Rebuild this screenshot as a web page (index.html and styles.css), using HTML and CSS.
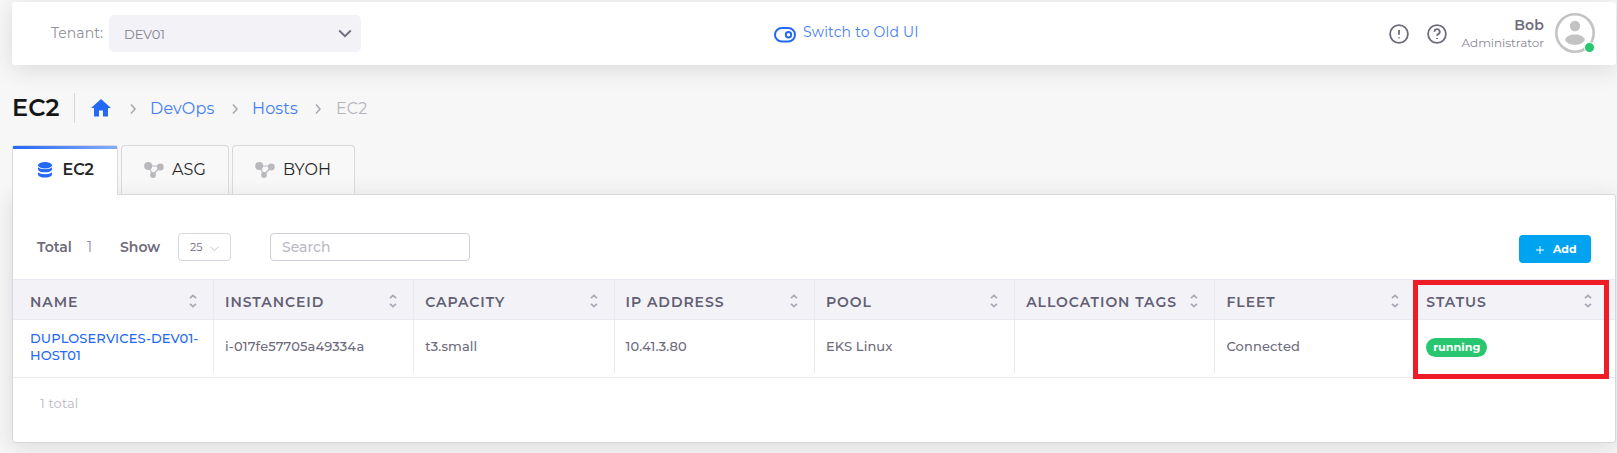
FILE: index.html
```html
<!DOCTYPE html>
<html lang="en">
<head>
<meta charset="utf-8">
<title>EC2 Hosts</title>
<link rel="stylesheet" href="styles.css">
</head>
<body>
<svg class="defs" width="0" height="0" aria-hidden="true">
  <symbol id="sort" viewBox="0 0 8 14"><path d="M1 4.2 4 1.4l3 2.8M1 9.8l3 2.8 3-2.8"/></symbol>
  <symbol id="chev" viewBox="0 0 6 10"><path d="M1 .600l4 4.400-4 4.400"/></symbol>
  <symbol id="nodes" viewBox="0 0 20 16"><path d="M4 4h12M4 4l5 9M16 5l-7 8" stroke="#b9b9bd" stroke-width="1.2"/><circle cx="4.2" cy="4" r="4"/><circle cx="16.3" cy="5" r="3.4"/><circle cx="9" cy="13" r="2.9"/></symbol>
</svg>
<header class="topbar">
  <label class="tenant">Tenant:</label>
  <div class="tenant-select"><span>DEV01</span><svg width="14" height="9" viewBox="0 0 14 9"><path d="M1.2 1.5 7 7.2l5.800-5.700"/></svg></div>
  <a class="switch"><svg width="22" height="16" viewBox="0 0 22 16"><rect x="1" y="1" width="20" height="13.500" rx="6.750"/><circle cx="14.500" cy="7.750" r="2.700"/></svg><span>Switch to Old UI</span></a>
  <div class="user">
    <svg class="help" width="20" height="20" viewBox="0 0 20 20"><circle cx="10" cy="10" r="8.900"/><path d="M10 6v4.700M10 13.200v1"/></svg>
    <svg class="help" width="20" height="20" viewBox="0 0 20 20"><circle cx="10" cy="10" r="8.900"/><path d="M7.500 7.800a2.600 2.600 0 1 1 3.700 2.300Q10 10.700 10 11.700M10 14v1"/></svg>
    <div class="who"><b>Bob</b><span>Administrator</span></div>
    <div class="avatar"><svg width="40" height="40" viewBox="0 0 40 40"><circle cx="20" cy="20" r="18.700" fill="none" stroke="#c3c3c3" stroke-width="2.600"/><circle cx="20" cy="13" r="5.200"/><path d="M10 26.800c2-7.200 18-7.200 20 0-3.500 6.900-16.500 6.900-20 0z"/></svg><i class="online"></i></div>
  </div>
</header>
<nav class="crumbs">
  <h1>EC2</h1>
  <svg class="home" width="20" height="18" viewBox="0 0 20 18"><path d="M10 0 0 9h3v8.500h5v-6h4v6h5V9h3z"/></svg>
  <svg class="chev" width="6" height="10"><use href="#chev"/></svg>
  <a class="devops">DevOps</a>
  <svg class="chev" width="6" height="10"><use href="#chev"/></svg>
  <a class="hosts">Hosts</a>
  <svg class="chev" width="6" height="10"><use href="#chev"/></svg>
  <span class="here">EC2</span>
</nav>
<div class="tabs">
  <div class="tab active"><svg width="14" height="16" viewBox="0 0 14 16"><ellipse cx="7" cy="3.200" rx="7" ry="3.200"/><path d="M0 5.300c2 2.600 12 2.600 14 0v2.200c-1 3.800-13 3.800-14 0zM0 10.200c2 2.600 12 2.600 14 0v2.200c-1 4.200-13 4.200-14 0z"/></svg><span>EC2</span></div>
  <div class="tab asg"><svg width="20" height="16"><use href="#nodes"/></svg><span>ASG</span></div>
  <div class="tab byoh"><svg width="20" height="16"><use href="#nodes"/></svg><span>BYOH</span></div>
</div>
<main class="panel">
  <div class="toolbar">
    <b class="total">Total</b><span class="count">1</span><b class="show">Show</b>
    <div class="size"><span>25</span><svg width="9" height="6" viewBox="0 0 9 6"><path d="M.5.700l4 4 4-4"/></svg></div>
    <div class="search">Search</div>
    <div class="add"><svg width="8" height="8" viewBox="0 0 8 8"><path d="M4 0v8M0 4h8"/></svg><span>Add</span></div>
  </div>
  <div class="table">
    <div class="row head">
      <div class="cell"><span>NAME</span><svg width="8" height="14"><use href="#sort"/></svg></div>
      <div class="cell"><span>INSTANCEID</span><svg width="8" height="14"><use href="#sort"/></svg></div>
      <div class="cell"><span>CAPACITY</span><svg width="8" height="14"><use href="#sort"/></svg></div>
      <div class="cell"><span>IP ADDRESS</span><svg width="8" height="14"><use href="#sort"/></svg></div>
      <div class="cell"><span>POOL</span><svg width="8" height="14"><use href="#sort"/></svg></div>
      <div class="cell"><span>ALLOCATION TAGS</span><svg width="8" height="14"><use href="#sort"/></svg></div>
      <div class="cell"><span>FLEET</span><svg width="8" height="14"><use href="#sort"/></svg></div>
      <div class="cell"><span>STATUS</span><svg width="8" height="14"><use href="#sort"/></svg></div>
    </div>
    <div class="row body">
      <div class="cell"><a class="host">DUPLOSERVICES-DEV01-<br>HOST01</a></div>
      <div class="cell">i-017fe57705a49334a</div>
      <div class="cell">t3.small</div>
      <div class="cell">10.41.3.80</div>
      <div class="cell">EKS Linux</div>
      <div class="cell"></div>
      <div class="cell">Connected</div>
      <div class="cell"><span class="badge">running</span></div>
    </div>
    <div class="highlight"></div>
  </div>
  <div class="footer">1 total</div>
</main>
</body>
</html>
```
FILE: styles.css
```css
* { box-sizing: border-box; }
body { margin: 0; height: 453px; overflow: hidden; padding: 2px 1px 0 12px; background: #f7f7f7; color: #6e6b7b; font: 13px/17px Montserrat, Inter, sans-serif; white-space: nowrap; }
svg { flex: none; fill: none; stroke: currentColor; }
.defs { position: absolute; }
b { font-weight: 600; }
a { color: #2468f6; }

.topbar { display: grid; grid-template-columns: 58px 252px 1fr auto; align-items: center; height: 63px; padding: 0 21px 1px 39px; background: #fff; border-radius: 3px; box-shadow: 0 4px 24px rgba(34, 41, 47, .14); }
.tenant { padding: 1px 0 0; font-size: 14px; color: #918f9b; letter-spacing: .05px; }
.tenant-select { display: flex; align-items: center; justify-content: space-between; height: 37px; margin-top: 1px; padding: 1px 9px 0 15px; background: #f3f2f7; border-radius: 5px; color: #827f8d; letter-spacing: -.1px; }
.tenant-select svg { stroke: #6e6b7b; stroke-width: 1.8; margin-top: -2px; }
.switch { display: flex; align-items: center; gap: 7px; padding-left: 413px; font-size: 14px; letter-spacing: .2px; }
.switch svg { stroke-width: 2; margin-top: 3px; }
.switch span { color: #4380f5; margin-top: -1px; }
.user { display: flex; align-items: center; }
.help { margin: 1px 18px 0 0; stroke-width: 1.8; }
.who { display: flex; flex-direction: column; align-items: flex-end; margin-left: -3px; margin-right: 11px; padding-top: 1px; }
.who b { font-size: 14px; line-height: 18px; letter-spacing: .15px; }
.who span { font-size: 12px; color: #8b8895; letter-spacing: -.05px; }
.avatar { position: relative; height: 40px; }
.avatar svg { fill: #c3c3c3; stroke: none; }
.online { position: absolute; right: 0; bottom: 0; width: 11px; height: 11px; border-radius: 50%; background: #28c76f; border: 1px solid #fff; }

.crumbs { display: flex; align-items: center; height: 30px; margin-top: 28px; font-size: 16px; }
h1 { width: 63px; height: 30px; margin: 0 16px 0 0; border-right: 1px solid #d6d5dd; font-size: 24px; line-height: 30px; font-weight: 600; letter-spacing: .1px; color: #161616; }
.home { fill: #2468f6; stroke: none; }
.chev { stroke: #a7a6ae; stroke-width: 1.5; margin: 2px 14px 0 20px; }
.crumbs a, .here { padding-top: 1px; }
.crumbs a { color: #4380f5; }
.devops { width: 68px; letter-spacing: .2px; }
.hosts { width: 49px; letter-spacing: .15px; }
.here { color: #b5b4bb; letter-spacing: .2px; margin-left: 1px; }
.crumbs .home + .chev { margin: 2px 14px 0 19px; }
.crumbs a + .chev { margin-left: 14px; }

.tabs { display: flex; gap: 3px; height: 50px; margin-top: 22px; position: relative; z-index: 1; font-size: 16px; color: #262626; }
.tab { display: flex; align-items: center; gap: 8px; height: 49px; padding: 0 0 1px 22px; border: 1px solid #d8d8dc; border-bottom: 0; border-radius: 4px 4px 0 0; background: linear-gradient(#f8f8f8 70%, #f0f0f0); }
.tab svg { fill: #b9b9bd; stroke: none; }
.tab.active { width: 106px; height: 50px; gap: 10.500px; padding: 0 0 2px 25px; background: #fff; font-weight: 600; position: relative; border-color: #dadade; }
.tab.active::before { content: ""; position: absolute; left: 0; right: 0; top: 0; height: 3px; background: linear-gradient(90deg, #2468f6, #86abfa); }
.tab.active svg { fill: #2468f6; }
.asg { width: 108px; letter-spacing: .1px; }
.byoh { width: 123px; letter-spacing: .2px; }

.panel { height: 249px; margin-top: -1px; background: #fff; border: 1px solid #d8d8dc; border-radius: 0 3px 3px 3px; box-shadow: 0 4px 24px rgba(34, 41, 47, .14); }
.toolbar { display: flex; align-items: center; height: 84px; padding: 20px 24px 0; font-size: 14px; }
.total { width: 50px; }
.count { width: 33px; color: #8b8895; }
.show { width: 58px; }
.size { display: flex; align-items: center; gap: 8px; width: 53px; height: 28px; padding-left: 11px; border: 1px solid #d8d6de; border-radius: 4px; font-size: 11px; }
.size svg { margin-top: 3px; stroke: #c3c2ca; }
.search { width: 200px; height: 28px; margin-left: 39px; padding: 5px 11px; border: 1px solid #d0ced7; border-radius: 4px; color: #b9b9c3; font-weight: 500; }
.add { display: flex; align-items: center; gap: 9px; width: 72px; height: 28px; margin: 3px 0 0 auto; padding: 2px 0 0 17px; border-radius: 4px; background: #00a3f0; color: #fff; font-size: 11px; font-weight: 700; }

.table { position: relative; }
.row { display: grid; grid-template-columns: 201px repeat(6, 200.300px) 1fr; }
.cell { display: flex; align-items: center; min-width: 0; padding-left: 11px; border-right: 1px solid #ebe9f1; }
.cell:first-child { padding-left: 17px; }
.cell:last-child { border-right: 0; padding-left: 10.500px; }
.head { height: 41px; background: #f3f2f7; border-top: 1px solid #ebe9f1; border-bottom: 1px solid #ebe9f1; font-size: 14px; font-weight: 600; letter-spacing: .95px; color: #625f75; }
.head span { padding-top: 5px; }
.head svg { margin: 3px 16px 0 auto; stroke: #aaa8b4; stroke-width: 1.8; }
.head .cell:last-child svg { margin-right: 23px; }
.body { height: 58px; padding-bottom: 4px; border-bottom: 1px solid #ebe9f1; font-weight: 500; letter-spacing: .12px; }
.badge { height: 19px; width: 61px; border-radius: 10px; background: #28c76f; color: #fff; font-size: 11.200px; font-weight: 700; line-height: 18px; text-align: center; margin-top: 1px; letter-spacing: 0; }
.highlight { position: absolute; left: 1400px; top: 1px; width: 196px; height: 99px; border: 5px solid #ee1c25; }
.footer { padding: 17px 0 0 27px; color: #b9b9c3; letter-spacing: .15px; }
```
